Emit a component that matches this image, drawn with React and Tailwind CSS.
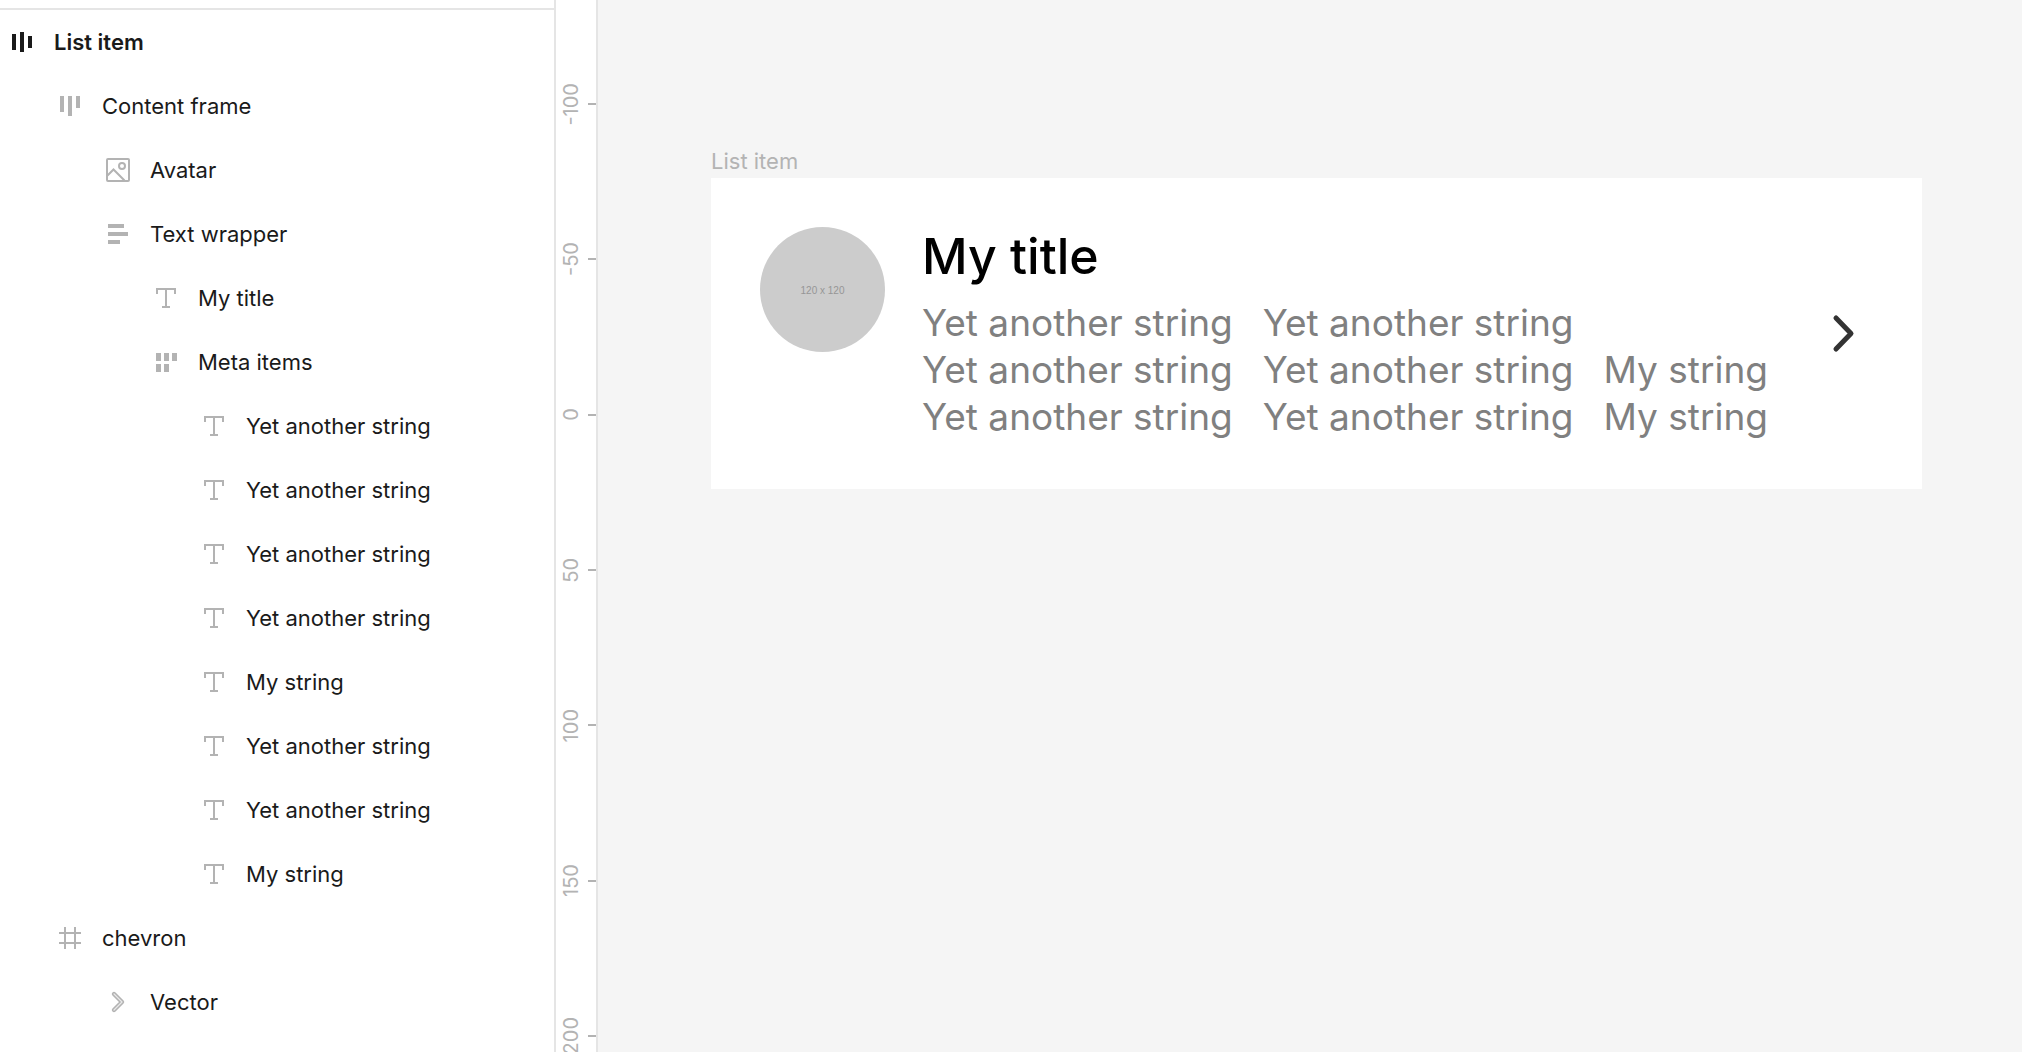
import React from "react";

function HorizontalBottomIcon() {
  return (
    <svg width="24" height="24" viewBox="0 0 24 24" fill="currentColor" aria-hidden="true">
      <path d="M2 4h4v16H2zM10 2h4v20h-4zM18 6h4v12h-4z" />
    </svg>
  );
}

function HorizontalTopIcon() {
  return (
    <svg width="24" height="24" viewBox="0 0 24 24" fill="currentColor" aria-hidden="true">
      <path d="M2 2h4v16H2zM10 2h4v20h-4zM18 2h4v12h-4z" />
    </svg>
  );
}

function ImageIcon() {
  return (
    <svg width="24" height="24" viewBox="0 0 24 24" fill="none" stroke="currentColor" strokeWidth="2" aria-hidden="true">
      <rect x="1" y="1" width="22" height="22" rx="1" />
      <circle cx="16" cy="8" r="3" />
      <path d="M1.5 17.5L7.5 11.5L18.5 22.5" />
    </svg>
  );
}

function VerticalIcon() {
  return (
    <svg width="24" height="24" viewBox="0 0 24 24" fill="currentColor" aria-hidden="true">
      <path d="M2 2h16v4H2zM2 10h20v4H2zM2 18h12v4H2z" />
    </svg>
  );
}

function TextIcon() {
  return (
    <svg width="24" height="24" viewBox="0 0 24 24" fill="currentColor" aria-hidden="true">
      <path d="M2 2h20v6h-2V4h-7v16h3v2H8v-2h3V4H4v4H2z" />
    </svg>
  );
}

function WrapIcon() {
  return (
    <svg width="24" height="24" viewBox="0 0 24 24" fill="currentColor" aria-hidden="true">
      <path d="M2 3h5v8H2zM10 3h5v8h-5zM18 3h5v8h-5zM2 14h5v8H2zM10 14h5v8h-5z" />
    </svg>
  );
}

function FrameIcon() {
  return (
    <svg width="24" height="24" viewBox="0 0 24 24" fill="currentColor" aria-hidden="true">
      <path d="M6 1h2v5h8V1h2v5h5v2h-5v8h5v2h-5v5h-2v-5H8v5H6v-5H1v-2h5V8H1V6h5zM8 8v8h8V8z" fillRule="evenodd" />
    </svg>
  );
}

function VectorIcon() {
  return (
    <svg width="24" height="24" viewBox="0 0 24 24" fill="none" strokeLinecap="round" strokeLinejoin="round" aria-hidden="true">
      <path d="M8 4L16 12L8 20" stroke="#b3b3b3" strokeWidth="4.4" />
      <path d="M8 4L16 12L8 20" stroke="#e9e9e9" strokeWidth="1.2" />
    </svg>
  );
}

const YET = "Yet another string";
const MY = "My string";
const META = [YET, YET, YET, YET, MY, YET, YET, MY];

const LAYERS = [
  {
    name: "List item",
    icon: HorizontalBottomIcon,
    root: true,
    children: [
      {
        name: "Content frame",
        icon: HorizontalTopIcon,
        children: [
          { name: "Avatar", icon: ImageIcon },
          {
            name: "Text wrapper",
            icon: VerticalIcon,
            children: [
              { name: "My title", icon: TextIcon },
              {
                name: "Meta items",
                icon: WrapIcon,
                children: META.map((name) => ({ name, icon: TextIcon })),
              },
            ],
          },
        ],
      },
      {
        name: "chevron",
        icon: FrameIcon,
        children: [{ name: "Vector", icon: VectorIcon }],
      },
    ],
  },
];

function Layer({ layer }) {
  const Icon = layer.icon;
  return (
    <li>
      <button
        type="button"
        className={
          layer.root
            ? "flex h-16 w-full items-center gap-5 text-left font-semibold text-[#1a1a1a]"
            : "flex h-16 w-full items-center gap-5 text-left text-[#1a1a1a]"
        }
      >
        <span className={layer.root ? "shrink-0" : "shrink-0 text-[#b3b3b3]"}>
          <Icon />
        </span>
        <span className="whitespace-nowrap">{layer.name}</span>
      </button>
      {layer.children && (
        <ul className="pl-12">
          {layer.children.map((child, i) => (
            <Layer key={i} layer={child} />
          ))}
        </ul>
      )}
    </li>
  );
}

const MARKS = ["-100", "-50", "0", "50", "100", "150", "200"];

function Ruler() {
  return (
    <div className="w-[42px] shrink-0 overflow-hidden border-r-2 border-[#e5e5e5] bg-white pt-[74px] text-xl text-[#b3b3b3]">
      <div className="flex h-[992px] flex-col justify-between">
        {MARKS.map((mark) => (
          <div key={mark} className="flex h-[60px] items-center justify-between pl-px">
            <span className="rotate-180 leading-7 [writing-mode:vertical-rl]">{mark}</span>
            <span className="h-0.5 w-2 bg-[#b3b3b3]" />
          </div>
        ))}
      </div>
    </div>
  );
}

function ListItemCard() {
  return (
    <article className="flex items-center bg-white py-[49px] pr-[50px] pl-[49px]">
      <div className="flex min-w-0 flex-1 items-start gap-[37px]">
        <div className="flex size-[125px] shrink-0 items-center justify-center rounded-full bg-[#cccccc] pt-0.5 font-['Liberation_Sans',sans-serif] text-[10px] text-[#969696]">
          120 x 120
        </div>
        <div className="flex min-w-0 flex-1 flex-col gap-3.5">
          <h1 className="text-[50px] leading-[58px] font-medium text-black">My title</h1>
          <div className="flex flex-wrap gap-x-[30px] text-[37px] leading-[47px] text-[#808080]">
            {META.map((text, i) => (
              <span key={i} className="whitespace-nowrap">
                {text}
              </span>
            ))}
          </div>
        </div>
      </div>
      <svg className="shrink-0" width="75" height="75" viewBox="0 0 75 75" fill="none" aria-hidden="true">
        <path d="M39 22L54 37.500L39 53" stroke="#333333" strokeWidth="5" strokeLinecap="round" strokeLinejoin="round" />
      </svg>
    </article>
  );
}

export default function App() {
  return (
    <div className="flex h-screen overflow-hidden bg-[#f5f5f5] font-['Inter',sans-serif]">
      <nav aria-label="Layers" className="w-[556px] shrink-0 overflow-hidden border-r-2 border-[#e5e5e5] bg-white pt-2 text-[22px]">
        <ul className="border-t-2 border-[#e5e5e5] pl-2.5">
          {LAYERS.map((layer) => (
            <Layer key={layer.name} layer={layer} />
          ))}
        </ul>
      </nav>
      <Ruler />
      <main className="min-w-0 flex-1 pt-[145px] pr-[100px] pl-[113px]">
        <div className="pb-px text-[22px] leading-8 text-[#b3b3b3]">List item</div>
        <ListItemCard />
      </main>
    </div>
  );
}
